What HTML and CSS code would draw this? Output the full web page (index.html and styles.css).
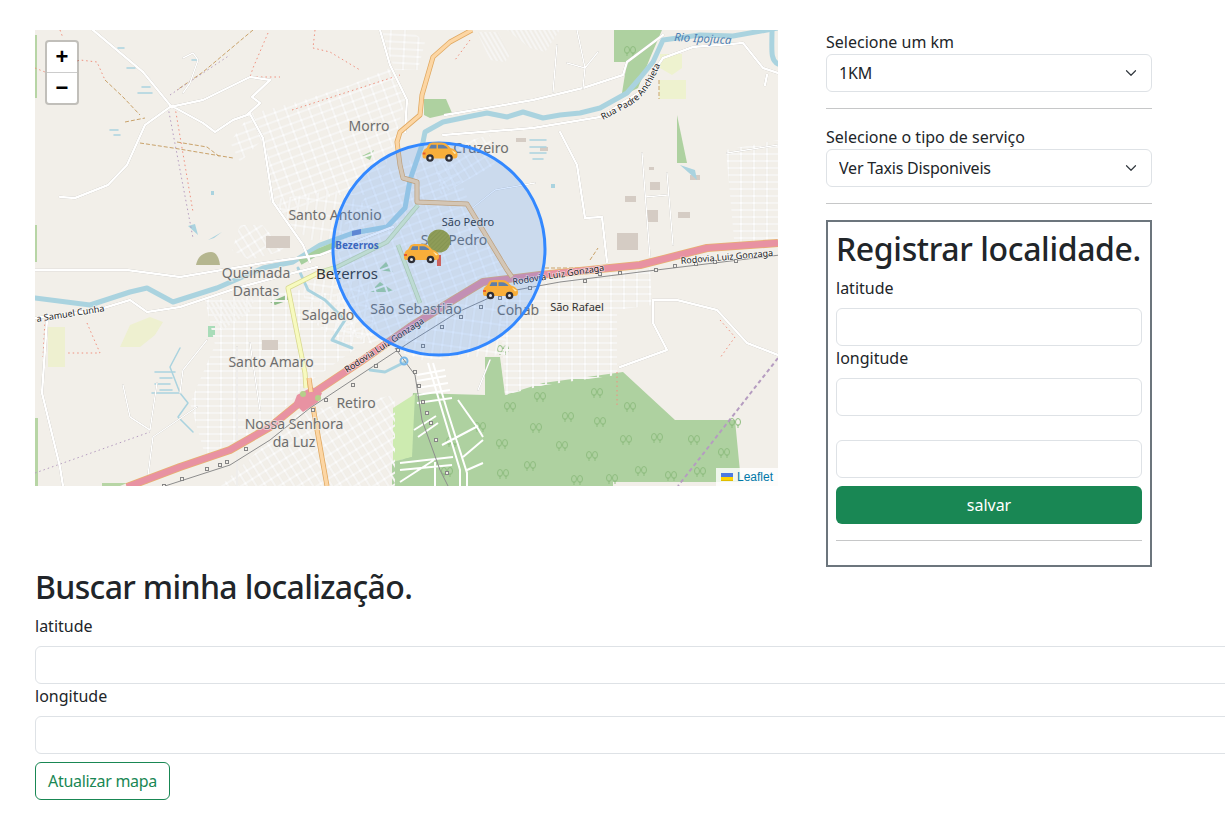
FILE: index.html
```html
<!DOCTYPE html>
<html lang="pt-BR">
<head>
	<meta charset="UTF-8">
	<meta name="viewport" content="width=device-width, initial-scale=1.0">
	<title>Taxis</title>
	<link rel="stylesheet" href="styles.css">
</head>
<body>
	<div class="top-row">
		<div class="map">
			<svg class="map-tiles" viewBox="35 30 743 456" width="743" height="456" xmlns="http://www.w3.org/2000/svg">
				<defs>
					<pattern id="grid-a" width="11" height="8" patternUnits="userSpaceOnUse" patternTransform="rotate(-20)">
						<path d="M0 0H11M0 0V8M0 8H11M11 0V8" class="grid-casing"/>
						<path d="M0 0H11M0 0V8M0 8H11M11 0V8" class="grid-line"/>
					</pattern>
					<pattern id="grid-b" width="9" height="14" patternUnits="userSpaceOnUse" patternTransform="rotate(8)">
						<path d="M0 0H9M0 0V14M0 14H9M9 0V14" class="grid-casing"/>
						<path d="M0 0H9M0 0V14M0 14H9M9 0V14" class="grid-line"/>
					</pattern>
					<pattern id="grid-c" width="14" height="7" patternUnits="userSpaceOnUse" patternTransform="rotate(3)">
						<path d="M0 0H14M0 0V7M0 7H14M14 0V7" class="grid-casing"/>
						<path d="M0 0H14M0 0V7M0 7H14M14 0V7" class="grid-line"/>
					</pattern>
					<pattern id="grid-d" width="8" height="10" patternUnits="userSpaceOnUse" patternTransform="rotate(-32)">
						<path d="M0 0H8M0 0V10M0 10H8M8 0V10" class="grid-casing"/>
						<path d="M0 0H8M0 0V10M0 10H8M8 0V10" class="grid-line"/>
					</pattern>
					<pattern id="grid-f" width="13" height="7" patternUnits="userSpaceOnUse">
						<path d="M0 0H13M0 0V7M0 7H13M13 0V7" class="grid-casing"/>
						<path d="M0 0H13M0 0V7M0 7H13M13 0V7" class="grid-line"/>
					</pattern>
					<pattern id="grid-g" width="4" height="40" patternUnits="userSpaceOnUse" patternTransform="rotate(-30)">
						<path d="M0 0V40M4 0V40" class="grid-casing"/>
						<path d="M0 0V40M4 0V40" class="grid-line"/>
					</pattern>
					<pattern id="marker-tex" width="3" height="3" patternUnits="userSpaceOnUse" patternTransform="rotate(45)">
						<rect width="3" height="3" fill="#8e9c58"/>
						<path d="M0 0V3" stroke="#7f8e4c" stroke-width="1"/>
					</pattern>
					<path id="road-padre" d="M603 120L633 104Q650 92 662 60"/>
					<g id="tree">
						<path d="M-3 5V1M3 5V1" class="tree"/>
						<ellipse cx="-3" cy="-1" rx="2.500" ry="3.500" class="tree"/>
						<ellipse cx="3" cy="-1" rx="2.500" ry="3.500" class="tree"/>
					</g>
					<g id="car">
						<path d="M1 13C1 8 3 6.500 5 5.500L7 2C8 .5 10 0 13 0H20C24 0 27 3 29 5.500C33 6.500 36 9 36 12C36 15 35 16 33 16H3C1.500 16 1 15 1 13Z" fill="#f8ae3a"/>
						<path d="M7.500 6L9.500 2.200H15V6ZM16.500 2.200H20C23 2.200 25 4 26.500 6H16.500Z" fill="#5f7ea8"/>
						<path d="M30 7.500L35 10.500L33 11.500Z" fill="#fde9b0"/>
						<path d="M1.200 10H4V12H1.100Z" fill="#e4572e"/>
						<circle cx="8.500" cy="15.500" r="3.800" fill="#2f2f36"/>
						<circle cx="8.500" cy="15.500" r="1.500" fill="#e4e4e4"/>
						<circle cx="27.500" cy="15.500" r="3.800" fill="#2f2f36"/>
						<circle cx="27.500" cy="15.500" r="1.500" fill="#e4e4e4"/>
					</g>
				</defs>

				<rect x="35" y="30" width="743" height="456" fill="#f2efe9"/>

				<!-- vegetation -->
				<path d="M485 357L500 357L505 395L543 383L587 377L623 372L675 420L735 420L741 482L613 482L613 486L400 486L413 393L485 395Z" fill="#aed1a0"/>
				<path d="M393 408L415 394L412 457L393 462Z" fill="#cdebb0"/>
				<path d="M392 462L412 457L405 486H392Z" fill="#aed1a0"/>
				<path d="M35 35H37V98H35ZM35 418H38V486H35ZM102 483H127L120 486H102ZM35 225H37V262H35Z" fill="#b7d5a5"/>
				<path d="M424 99H446L452 113L430 118L424 115Z" fill="#aed1a0"/>
				<path d="M614 30H662L650 58L638 88L626 94L622 93L627 62H614Z" fill="#aed1a0"/>
				<path d="M660 54H682V68L672 75L660 68Z" fill="#eef2cf"/>
				<path d="M659 80H686V99H659Z" fill="#eef2cf"/>
				<path d="M677 115L687 163H677Z" fill="#aed1a0"/>
				<path d="M48 327H65V367H48ZM120 347L130 325L150 317L163 322L155 335L140 347Z" fill="#eef0d0"/>
				<path d="M208 326H215V337H208Z" fill="#a8dcb8"/>
				<path d="M196 265C198 255 205 252 211 252C216 252 219 257 220 265Z" fill="#b5b68f"/>
				<path d="M370 292L380 282L395 292Z" fill="#a6cf9e"/>
				<path d="M270 302L289 294V300L275 305Z" fill="#8fbc8a"/>
				<path d="M362 156L374 150L370 160ZM378 270L386 262L393 272Z" fill="#a6cf9e"/>

				<use href="#tree" x="540" y="397"/><use href="#tree" x="510" y="407"/><use href="#tree" x="597" y="393"/>
				<use href="#tree" x="630" y="407"/><use href="#tree" x="568" y="417"/><use href="#tree" x="600" y="422"/>
				<use href="#tree" x="536" y="428"/><use href="#tree" x="480" y="427"/><use href="#tree" x="452" y="442"/>
				<use href="#tree" x="502" y="444"/><use href="#tree" x="562" y="446"/><use href="#tree" x="626" y="440"/>
				<use href="#tree" x="657" y="438"/><use href="#tree" x="694" y="440"/><use href="#tree" x="724" y="453"/>
				<use href="#tree" x="592" y="456"/><use href="#tree" x="530" y="466"/><use href="#tree" x="503" y="474"/>
				<use href="#tree" x="641" y="471"/><use href="#tree" x="700" y="472"/><use href="#tree" x="447" y="472"/>
				<use href="#tree" x="577" y="480"/><use href="#tree" x="612" y="479"/><use href="#tree" x="671" y="476"/>
				<use href="#tree" x="503" y="350"/><use href="#tree" x="735" y="423"/><use href="#tree" x="630" y="51"/>

				<!-- neighbourhood street grids -->
				<path d="M230 142L250 114L297 102L350 85L390 68L405 100L395 140L375 195L335 195L282 215L270 200L262 140L240 162Z" fill="url(#grid-a)"/>
				<path d="M380 30H410L425 42L418 70L395 70Z" fill="url(#grid-c)"/>
				<path d="M270 200L335 190L378 210L350 240L310 240L290 225Z" fill="url(#grid-b)"/>
				<path d="M240 225H262L285 250L250 260L232 250Z" fill="url(#grid-d)"/>
				<path d="M205 300L300 290L340 295L368 340L305 385L270 425L205 455L190 403L215 345Z" fill="url(#grid-f)"/>
				<path d="M300 280L368 280L375 335L345 345L310 320Z" fill="url(#grid-b)"/>
				<path d="M220 486L300 412L395 395L395 486Z" fill="url(#grid-d)"/>
				<path d="M345 222L392 165L450 150L470 205L512 272L440 300L385 350L340 330L330 285Z" fill="url(#grid-a)"/>
				<path d="M385 345L445 298L510 290L505 355L420 360Z" fill="url(#grid-b)"/>
				<path d="M435 150L490 135L495 165L440 195Z" fill="url(#grid-d)"/>
				<path d="M500 300L540 283L650 268L652 305L617 310L617 375L545 385L505 395Z" fill="url(#grid-f)"/>
				<path d="M477 32H498L510 55L505 62L490 60Z" fill="url(#grid-g)"/>
				<path d="M507 30H560L545 52L530 48Z" fill="url(#grid-g)"/>
				<path d="M726 150L778 140V240L735 250Z" fill="url(#grid-f)"/>
				<path d="M205 303L255 298L250 312L222 330Z" fill="url(#grid-g)"/>

				<!-- south streets over the forest -->
				<path d="M433 363L447 410L467 473V486M428 363L442 410L460 470V486M417 375L445 370M417 381L446 376M417 388L448 383M417 395L450 390M417 403L452 398M418 437L438 423M414 430L436 416M400 463L453 457M400 470L452 465M400 482L434 460M458 400L477 427L483 437M463 457L483 440M467 470L483 463M442 445L478 426M435 486V462" class="street-white"/>

				<!-- buildings -->
				<path d="M617 233H638V250H617ZM647 210H658V222H647ZM625 196H636V202H625ZM650 182H660V190H650ZM678 212H690V218H678ZM690 175H700V180H690ZM649 167H654V170H649ZM266 236H290V248H266ZM262 340H278V350H262ZM516 138H526V142H516ZM540 147H548V151H540Z" fill="#d5ccc4"/>

				<!-- water -->
				<path d="M35 298L90 305L130 292L147 288L173 302L217 288L263 268L293 262L320 245L353 233L387 227L405 208L410 180L423 142L425 132L443 122L467 117L487 113L507 117L523 112L543 118L560 115L580 113L600 108L627 93L640 78L653 62L663 40L700 35L733 36L778 28" class="river"/>
				<path d="M772 30C772 50 770 60 778 64" class="river"/>
				<path d="M298 268L308 290L325 300L345 320L332 340L352 348" class="river mid"/>
				<path d="M180 348L170 367L180 393L188 403L178 417L193 432" class="river thin"/>
				<path d="M370 370L385 372L405 362" class="river mid"/>
				<path d="M155 372H175M160 378H172M155 384H170M160 390H172M152 393H180M118 48H124M127 68H135M192 60H198M138 93H152M142 87H150M110 130H118M114 135H120M530 140H546M530 147H546M530 153H546M533 159H543" class="river thin"/>
				<path d="M188 226L195 224L198 235ZM208 240L222 232L214 238ZM211 191H214V195H211ZM551 184H555V188H551ZM680 165L695 170L697 180Z" fill="#aad3df"/>
				<path d="M300 262L320 251L337 244" class="green-strip"/>

				<!-- paths and tracks -->
				<path d="M253 30L203 72L177 90M105 80L123 97L140 115M125 122L145 118M140 143L173 148L233 158M177 142L207 147L220 157M659 80V99M590 260L598 248M545 268H590" class="track"/>
				<path d="M60 30L63 38M35 68L45 72L80 60L97 62L105 80M268 33L253 68L250 77L280 77M315 30L313 48L330 52L360 70M175 107L193 212M87 323L93 337L100 353L67 353M45 320L43 357M720 320L735 337L720 358M617 372V405M470 40L455 60M292 110L400 75" class="dots red"/>
				<path d="M168 107L193 238M170 95L230 55M35 473L150 432" class="dots purple"/>
				<path d="M778 358L678 486" class="dots purple thick"/>

				<!-- white roads -->
				<g class="road-set">
					<path d="M93 30L143 72L170 105L203 123L215 132L233 120L250 114L263 138L273 202L303 245L310 262M60 197L75 198L108 185L127 165L145 125L170 107L203 100L250 77L270 80L252 97L260 103L248 114M35 318L97 310L130 300L147 312L180 307L237 288L293 273L317 267M35 270L127 270L180 277L263 263L320 255L393 227M380 30L390 65L407 100L405 132M47 320L42 393L60 467L63 486M443 135L533 128L600 117L640 92L663 58L693 47L743 43L763 68L778 73M767 75L765 85M560 132L577 165L585 218L602 217L607 262M445 115L533 100L583 88L623 75L627 62L663 35M653 300L677 300L717 310L747 343L778 355M653 300V323L667 350L620 367"/>
				</g>
				<g class="road-set thin">
					<path d="M207 340L183 370L180 393M123 385L130 417L150 430L157 383M147 483L153 437L197 407M237 347V486M250 343L260 410M585 68L598 52M585 68L567 63M577 30L585 68L583 88M557 45L553 92M642 153L650 258M667 173L673 245M645 197L668 195M478 390L490 360M183 58L193 53L198 60L190 83L183 93M470 210L495 190L535 183M727 153L778 145"/>
				</g>

				<!-- highways -->
				<path d="M418 205L387 242L337 267L320 272M398 245L420 303" class="major green-road-edge"/>
				<path d="M418 205L387 242L337 267L320 272M398 245L420 303" class="major green-road"/>
				<path d="M127 487L180 467L230 450L270 427L303 400L363 360L410 327L450 302L483 282L540 275L640 265L707 248L778 243" class="hwy-edge"/>
				<path d="M127 487L180 467L230 450L270 427L303 400L363 360L410 327L450 302L483 282L540 275L640 265L707 248L778 243" class="hwy"/>
				<path d="M297 395L312 387L322 393L318 402L303 412L294 403Z" fill="#e892a2"/>
				<circle cx="303" cy="394" r="3" fill="#b5cf8a"/><circle cx="318" cy="398" r="3" fill="#b5cf8a"/>
				<path d="M320 272L288 288L305 373L306 388" class="major yellow-edge"/>
				<path d="M320 272L288 288L305 373L306 388" class="major yellow"/>
				<path d="M472 30L450 42L433 57L422 95L420 115L400 132L397 142L400 165L403 178L417 182L417 202L467 204L507 270L512 277" class="major orange-edge"/>
				<path d="M472 30L450 42L433 57L422 95L420 115L400 132L397 142L400 165L403 178L417 182L417 202L467 204L507 270L512 277" class="major orange"/>
				<path d="M309 378L311 392M313 407L327 486" class="major orange-edge"/>
				<path d="M309 378L311 392M313 407L327 486" class="major orange"/>

				<!-- railway -->
				<path d="M165 486L230 465L270 440L310 408L410 342L458 312L500 293L560 282L640 272L780 255" class="rail"/>
				<path d="M395 348L415 375L422 420L440 470L448 486" class="rail"/>
				<path d="M162 484h3v3h-3zM180 477h3v3h-3zM205 467h3v3h-3zM218 463h3v3h-3zM225 460h3v3h-3zM244 447h3v3h-3zM311 408h3v3h-3zM324 398h3v3h-3zM351 383h3v3h-3zM374 364h3v3h-3zM396 348h3v3h-3zM413 370h3v3h-3zM417 384h3v3h-3zM421 400h3v3h-3zM425 411h3v3h-3zM429 421h3v3h-3zM434 438h3v3h-3zM445 471h3v3h-3zM421 344h3v3h-3zM440 325h3v3h-3zM459 315h3v3h-3zM479 305h3v3h-3zM498 296h3v3h-3zM528 286h3v3h-3zM583 279h3v3h-3zM598 272h3v3h-3zM618 271h3v3h-3zM654 268h3v3h-3zM673 264h3v3h-3zM694 262h3v3h-3zM713 260h3v3h-3zM734 259h3v3h-3z" class="rail-stop"/>
				<path d="M352 231l9-2v5l-9 2z" fill="#6a86c8"/>
				<circle cx="404" cy="361" r="3.500" fill="none" stroke="#7ab8e8" stroke-width="2"/>

				<!-- place labels -->
				<text x="369" y="131" class="place">Morro</text>
				<text x="481" y="153" class="place">Cruzeiro</text>
				<text x="335" y="220" class="place">Santo Antonio</text>
				<text x="468" y="226" class="place tiny dark">São Pedro</text>
				<text x="454" y="245" class="place">São Pedro</text>
				<text x="357" y="249" class="station">Bezerros</text>
				<text x="256" y="278" class="place">Queimada</text>
				<text x="256" y="296" class="place">Dantas</text>
				<text x="347" y="279" class="place big">Bezerros</text>
				<text x="328" y="320" class="place">Salgado</text>
				<text x="416" y="314" class="place">São Sebastião</text>
				<text x="518" y="315" class="place">Cohab</text>
				<text x="577" y="311" class="place tiny dark">São Rafael</text>
				<text x="271" y="367" class="place">Santo Amaro</text>
				<text x="356" y="408" class="place">Retiro</text>
				<text x="294" y="429" class="place">Nossa Senhora</text>
				<text x="294" y="447" class="place">da Luz</text>

				<!-- road labels -->
				<text transform="translate(674 41) rotate(3)" class="water-label">Rio Ipojuca</text>
				<text class="road-label"><textPath href="#road-padre">Rua Padre Anchieta</textPath></text>
				<text transform="translate(37 322) rotate(-9)" class="road-label">a Samuel Cunha</text>
				<text transform="translate(347 373) rotate(-33)" class="road-label">Rodovia Luiz Gonzaga</text>
				<text transform="translate(513 285) rotate(-9)" class="road-label">Rodovia Luiz Gonzaga</text>
				<text transform="translate(681 264) rotate(-5)" class="road-label">Rodovia Luiz Gonzaga</text>

				<!-- radius circle -->
				<circle cx="439" cy="249" r="106" class="radius"/>

				<!-- markers -->
				<path d="M437 255H441V266H437Z" fill="#cc625e"/>
				<circle cx="439" cy="241" r="11.500" fill="url(#marker-tex)"/>
				<use href="#car" x="421.500" y="142.500"/>
				<use href="#car" x="403" y="244"/>
				<use href="#car" x="482" y="280"/>
			</svg>

			<div class="zoom-control">
				<a class="zoom-btn">+</a>
				<a class="zoom-btn">&#8722;</a>
			</div>
			<div class="attribution">
				<svg class="flag" viewBox="0 0 12 8" width="12" height="8" xmlns="http://www.w3.org/2000/svg">
					<path fill="#4C7BE1" d="M0 0h12v4H0z"/>
					<path fill="#FFD500" d="M0 4h12v3H0z"/>
					<path fill="#E0BC00" d="M0 7h12v1H0z"/>
				</svg>
				<a class="attr-link">Leaflet</a>
			</div>
		</div>

		<div class="side">
			<label class="form-label">Selecione um km</label>
			<select class="form-select"><option>1KM</option></select>
			<hr>
			<label class="form-label">Selecione o tipo de serviço</label>
			<select class="form-select"><option>Ver Taxis Disponiveis</option></select>
			<hr>
			<div class="register-box">
				<h2>Registrar localidade.</h2>
				<label class="form-label">latitude</label>
				<input class="form-control" type="text">
				<label class="form-label">longitude</label>
				<input class="form-control" type="text">
				<input class="form-control spaced" type="text">
				<button class="btn-save">salvar</button>
				<hr>
			</div>
		</div>
	</div>

	<div class="search-section">
		<h2>Buscar minha localização.</h2>
		<label class="form-label">latitude</label>
		<input class="form-control" type="text">
		<label class="form-label">longitude</label>
		<input class="form-control" type="text">
		<button class="btn-outline">Atualizar mapa</button>
	</div>
</body>
</html>
```

FILE: styles.css
```css
html, body { margin: 0; padding: 0; background-color: #fff; overflow: hidden; }
body {
	width: 1225px;
	height: 823px;
	padding: 30px 0 0 35px;
	box-sizing: border-box;
	font-family: "Noto Sans", "Open Sans", sans-serif;
	font-size: 16px;
	line-height: 24px;
	color: #212529;
}

div { box-sizing: border-box; }

.top-row { display: flex; gap: 48px; align-items: flex-start; }

/* map */
.map { position: relative; width: 743px; height: 456px; overflow: hidden; flex: none; }
.map-tiles { display: block; }

.grid-casing { fill: none; stroke: #dcd8d0; stroke-width: 2.200; }
.grid-line { fill: none; stroke: #fff; stroke-width: 1.500; }
.street-white { fill: none; stroke: #fff; stroke-width: 2; }
.tree { fill: none; stroke: #8fbd80; stroke-width: 1; }
.river { fill: none; stroke: #aad3df; stroke-width: 5; stroke-linejoin: round; stroke-linecap: round; }
.river.mid { stroke-width: 3; }
.river.thin { stroke-width: 1.500; }
.green-strip { fill: none; stroke: #a6cf9e; stroke-width: 6; }
.road-set path { fill: none; stroke: #fff; stroke-width: 2.500; stroke-linejoin: round; stroke-linecap: round; filter: drop-shadow(0 0 .6px #aaa69e); }
.road-set.thin path { stroke-width: 1.500; }
.track { fill: none; stroke: #c9a26a; stroke-width: 1; stroke-dasharray: 4 2; }
.dots { fill: none; stroke-width: 1; stroke-dasharray: 1.500 3; }
.dots.red { stroke: #f0907e; }
.dots.purple { stroke: #b59cc0; }
.dots.purple.thick { stroke-width: 2; stroke-dasharray: 4 3; }
.hwy-edge { fill: none; stroke: #e8b070; stroke-width: 8; stroke-linejoin: round; }
.hwy { fill: none; stroke: #e892a2; stroke-width: 6.500; stroke-linejoin: round; }
.major { fill: none; stroke-linejoin: round; }
.yellow-edge { stroke: #d8d890; stroke-width: 5; }
.yellow { stroke: #f7fabf; stroke-width: 3.500; }
.orange-edge { stroke: #e0a860; stroke-width: 5; }
.orange { stroke: #fcd6a4; stroke-width: 3.500; }
.green-road-edge { stroke: #c5d8a8; stroke-width: 4.500; }
.green-road { stroke: #e0f0c8; stroke-width: 3; }
.rail { fill: none; stroke: #8d8d8d; stroke-width: 1; }
.rail-stop { fill: #f2efe9; stroke: #858585; stroke-width: 1; shape-rendering: crispEdges; }

.place {
	font-family: "Noto Sans", sans-serif;
	font-size: 14px;
	fill: #6e6e6e;
	text-anchor: middle;
	stroke: #f2efe9;
	stroke-width: 2px;
	stroke-opacity: .7;
	paint-order: stroke;
}
.place.big { fill: #333; font-size: 15px; }
.place.tiny { font-size: 11px; }
.place.dark { fill: #333; }
.station { font-family: "Noto Sans", sans-serif; font-size: 10px; font-weight: bold; fill: #3f5fb0; text-anchor: middle; }
.water-label { font-family: "Noto Sans", sans-serif; font-size: 11.500px; font-style: italic; fill: #4d80b3; }
.road-label {
	font-family: "Noto Sans", sans-serif;
	font-size: 9px;
	fill: #222;
	stroke: #fff;
	stroke-width: 1.500px;
	stroke-opacity: .6;
	paint-order: stroke;
}
.radius { fill: #3388ff; fill-opacity: .2; stroke: #3388ff; stroke-width: 3; }

.zoom-control {
	position: absolute;
	top: 10px;
	left: 10px;
	width: 34px;
	background: #fff;
	border: 2px solid rgba(0, 0, 0, 0.2);
	border-radius: 4px;
	background-clip: padding-box;
	font-family: "Liberation Sans", sans-serif;
}
.zoom-btn {
	display: block;
	height: 30px;
	line-height: 30px;
	text-align: center;
	font-size: 22px;
	font-weight: bold;
	color: #000;
}
.zoom-btn:first-child { border-bottom: 1px solid #ccc; }

.attribution {
	position: absolute;
	right: 0;
	bottom: 0;
	height: 18px;
	padding: 0 5px;
	display: flex;
	align-items: center;
	gap: 4px;
	background: rgba(255, 255, 255, 0.8);
	font-family: "Liberation Sans", sans-serif;
	font-size: 12px;
	line-height: 18px;
}
.attr-link { color: #0078a8; }
.flag { display: block; }

/* right column */
.side { width: 326px; flex: none; }

.form-label { display: block; }

.form-select {
	display: block;
	width: 100%;
	height: 38px;
	padding: 6px 36px 6px 12px;
	background: #fff url("data:image/svg+xml,%3csvg xmlns='http://www.w3.org/2000/svg' viewBox='0 0 16 16'%3e%3cpath fill='none' stroke='%23343a40' stroke-linecap='round' stroke-linejoin='round' stroke-width='1.600' d='m2 5 6 6 6-6'/%3e%3c/svg%3e") no-repeat right 12px center / 16px 12px;
	border: 1px solid #dee2e6;
	border-radius: 6px;
	font: inherit;
	letter-spacing: -0.2px;
	color: inherit;
	appearance: none;
}

hr { margin: 16px 0; border: 0; border-top: 1px solid #c6c7c8; }

.register-box { border: 2px solid #6c757d; padding: 8px; }

h2 { margin: 0 0 8px 0; font-size: 32px; line-height: 38px; font-weight: 500; letter-spacing: -0.65px; white-space: nowrap; }
.register-box h2 { letter-spacing: -0.36px; }

.form-control {
	display: block;
	width: 100%;
	height: 38px;
	box-sizing: border-box;
	padding: 6px 12px;
	margin: 8px 0 0 0;
	background: #fff;
	border: 1px solid #dee2e6;
	border-radius: 6px;
	outline: 0;
}
.form-control.spaced { margin-top: 24px; }

.btn-save {
	display: block;
	width: 100%;
	height: 38px;
	margin-top: 8px;
	background: #198754;
	color: #fff;
	border: 0;
	border-radius: 6px;
	font: inherit;
}

/* lower form */
.search-section { margin-top: 1px; width: 1300px; }

.btn-outline {
	display: block;
	height: 38px;
	margin-top: 8px;
	padding: 0 12px;
	background: #fff;
	color: #198754;
	border: 1px solid #198754;
	border-radius: 6px;
	font: inherit;
	letter-spacing: -0.3px;
}
```
